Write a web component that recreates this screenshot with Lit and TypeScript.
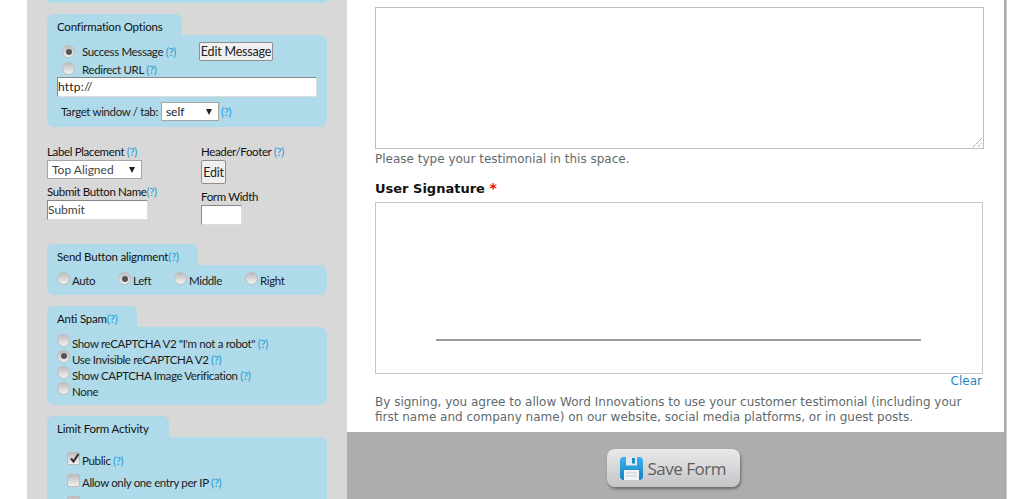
import { LitElement, html, css } from "lit";
import { customElement } from "lit/decorators.js";

const help = () => html`<span class="help">(?)</span>`;

@customElement("app-root")
export class AppRoot extends LitElement {
  static styles = css`
    :host {
      display: block;
      width: 1013px;
      height: 499px;
      overflow: hidden;
      background: #fff;
      font-family: "Lato", "Liberation Sans", sans-serif;
      font-size: 11.5px;
      letter-spacing: -0.36px;
      color: #1c1c1c;
    }
    .page { display: flex; height: 499px; padding-left: 27px; box-sizing: border-box; }
    .side { width: 320px; flex: none; background: #d8d8d8; padding: 0 20px; box-sizing: border-box; height: 499px; overflow: hidden; display: flex; flex-direction: column; }
    .main { width: 657px; flex: none; display: flex; flex-direction: column; height: 499px; border-right: 2px solid #a9a9a9; box-shadow: 1px 0 0 #cfcfcf; background: #fff; letter-spacing: 0; }
    .topcap { height: 3px; background: #afdae9; border-radius: 0 0 7px 7px; flex: none; }
    .tab { background: #afdae9; border-radius: 6px 6px 0 0; height: 21px; line-height: 25px; padding-left: 10px; box-sizing: border-box; align-self: flex-start; color: #111; letter-spacing: -0.2px; white-space: nowrap; }
    .group { display: flex; flex-direction: column; flex: none; }
    .panel { background: #afdae9; border-radius: 0 7px 7px 7px; }
    .help { color: #1d9ad6; }
    .radio, .check { margin: 0; flex: none; box-sizing: border-box; background: linear-gradient(#bdbdbd, #f2f2f2); border: 1px solid #bcbcbc; position: relative; display: block; }
    .radio { width: 13px; height: 13px; border-radius: 50%; }
    .radio.on::after { content: ""; position: absolute; left: 2.5px; top: 2.5px; width: 6px; height: 6px; border-radius: 50%; background: #555; }
    .check { width: 13px; height: 13px; border-radius: 2px; }
    .check svg { position: absolute; left: 0; top: -1px; }
    .row { display: flex; align-items: center; white-space: nowrap; }
    .conf { height: 92px; padding: 7px 10px 0 10px; box-sizing: border-box; }
    .conf .r1 { height: 19px; padding-left: 5px; }
    .conf .r1 .lab { margin-left: 7px; width: 117px; }
    .conf .r2 { height: 16px; padding-left: 5px; }
    .conf .r2 .lab { margin: 0 0 0 7px; }
    .conf .r2 .radio { margin-top: -2px; }
    .btn { font: inherit; font-size: 12.5px; letter-spacing: -0.2px; color: #222; background: #f0f0f0; border: 1px solid #8f8f8f; border-radius: 2px; padding: 0; box-sizing: border-box; text-align: center; display: block; }
    .urlbox { height: 20px; width: 260px; background: #fff; border: 1px solid #888; border-right-color: #ddd; border-bottom-color: #ddd; box-sizing: border-box; line-height: 17px; font-size: 12px; letter-spacing: 0.2px; }
    .target { height: 28px; padding-left: 4px; }
    .target .help { margin-left: 2px; }
    .sel { background: #fff; border: 1px solid #a5a5a5; box-sizing: border-box; display: flex; align-items: center; justify-content: space-between; font-size: 12px; letter-spacing: 0; }
    .sel.self { width: 58px; height: 19px; margin: 1px 0 0 3px; padding: 0 6px 0 4px; }
    .arrow { width: 0; height: 0; border-left: 3.5px solid transparent; border-right: 3.5px solid transparent; border-top: 6px solid #222; }
    .settings { display: flex; height: 117px; flex: none; padding-top: 18px; box-sizing: border-box; }
    .colL { width: 154px; flex: none; display: flex; flex-direction: column; }
    .colR { display: flex; flex-direction: column; }
    .lbl { color: #111; line-height: 14px; white-space: nowrap; }
    .sel.top { width: 95px; height: 19px; margin-top: 1px; padding: 0 6px 0 4px; color: #444; }
    .lbl.b { margin-top: 6px; }
    .inp { background: #fff; border: 1px solid #888; border-right-color: #ddd; border-bottom-color: #ddd; box-sizing: border-box; }
    .inp.sub { width: 101px; height: 20px; margin-top: 1px; line-height: 18px; color: #444; font-size: 12px; letter-spacing: 0; }
    .edit { width: 25px; height: 24px; margin-top: 1px; padding-top: 1px; }
    .lbl.c { margin-top: 6px; }
    .inp.wid { width: 41px; height: 20px; margin-top: 1px; }
    .align .tab { width: 151px; }
    .align .panel { height: 30px; display: flex; align-items: center; padding-left: 10px; box-sizing: border-box; }
    .opt { display: flex; align-items: center; height: 100%; }
    .opt .radio { margin: -3px 2px 0 0; }
    .spam { margin-top: 11px; }
    .spam .tab { width: 90px; }
    .spam .panel { height: 78px; padding: 8px 10px 0 10px; box-sizing: border-box; }
    .spam .row { height: 16px; }
    .spam .radio { margin: -6px 2px 0 0; }
    .limit { margin-top: 11px; }
    .limit .tab { width: 122px; }
    .limit .panel { height: 100px; padding-top: 12px; box-sizing: border-box; padding-left: 20px; }
    .limit .row { height: 22px; }
    .limit .check { margin: -4px 2px 0 0; }
    .content { flex: 1; padding: 0 20px 0 28px; min-height: 0; font-family: "DejaVu Sans", "Verdana", sans-serif; }
    .ta { width: 609px; height: 142px; margin-top: 7px; border: 1px solid #bdbdbd; box-sizing: border-box; position: relative; background: #fff; }
    .ta svg { position: absolute; right: 0; bottom: 0; }
    .note { color: #5f6a6e; font-size: 12px; }
    .hint { margin-top: 2px; height: 16px; line-height: 16px; white-space: nowrap; }
    .sigl { margin-top: 14px; height: 17px; line-height: 16px; font-weight: 700; font-size: 13px; color: #111; white-space: nowrap; }
    .req { color: #f00; font-size: 14px; line-height: 0; }
    .sig { width: 608px; height: 172px; margin-top: 4px; border: 1px solid #c8c8c8; box-sizing: border-box; position: relative; }
    .sig .line { position: absolute; left: 60px; top: 136px; width: 485px; height: 2px; background: #9a9a9a; }
    .clear { width: 607px; text-align: right; color: #1f88c6; font-size: 12px; line-height: 14px; }
    .terms { margin-top: 7px; width: 600px; line-height: 15px; }
    .foot { height: 67px; flex: none; background: #adadad; display: flex; justify-content: center; padding: 17px 5px 0 0; box-sizing: border-box; }
    .save { width: 133px; height: 38px; box-sizing: border-box; border-radius: 8px; background: linear-gradient(#e9e9e9, #c4c5c7); box-shadow: 1px 2px 3px rgba(0,0,0,.4); display: flex; align-items: center; padding-left: 13px; gap: 5px; color: #5e5e5e; font-size: 17px; font-family: "Open Sans", sans-serif; white-space: nowrap; letter-spacing: -0.5px; }
    .save svg { flex: none; }
  `;

  render() {
    return html`<div class="page">
      <div class="side">
        <div class="topcap"></div>
        <div class="group" style="margin-top:11px">
          <div class="tab" style="width:135px">Confirmation Options</div>
          <div class="panel conf">
            <div class="row r1"><span class="radio on"></span><span class="lab">Success Message ${help()}</span><button class="btn" style="width:74px;height:19px">Edit Message</button></div>
            <div class="row r2"><span class="radio"></span><span class="lab">Redirect URL ${help()}</span></div>
            <div class="urlbox">http://</div>
            <div class="row target">Target window / tab:<span class="sel self"><span>self</span><span class="arrow"></span></span>${help()}</div>
          </div>
        </div>
        <div class="settings">
          <div class="colL">
            <div class="lbl">Label Placement ${help()}</div>
            <div class="sel top"><span>Top Aligned</span><span class="arrow"></span></div>
            <div class="lbl b">Submit Button Name${help()}</div>
            <div class="inp sub">Submit</div>
          </div>
          <div class="colR">
            <div class="lbl">Header/Footer ${help()}</div>
            <button class="btn edit">Edit</button>
            <div class="lbl c">Form Width</div>
            <div class="inp wid"></div>
          </div>
        </div>
        <div class="group align">
          <div class="tab">Send Button alignment${help()}</div>
          <div class="panel">
            <label class="opt" style="width:61px"><span class="radio"></span><span>Auto</span></label>
            <label class="opt" style="width:56px"><span class="radio on"></span><span>Left</span></label>
            <label class="opt" style="width:71px"><span class="radio"></span><span>Middle</span></label>
            <label class="opt"><span class="radio"></span><span>Right</span></label>
          </div>
        </div>
        <div class="group spam">
          <div class="tab">Anti Spam${help()}</div>
          <div class="panel">
            <div class="row"><span class="radio"></span>Show reCAPTCHA V2 "I'm not a robot"&nbsp;${help()}</div>
            <div class="row"><span class="radio on"></span>Use Invisible reCAPTCHA V2&nbsp;${help()}</div>
            <div class="row"><span class="radio"></span>Show CAPTCHA Image Verification&nbsp;${help()}</div>
            <div class="row"><span class="radio"></span>None</div>
          </div>
        </div>
        <div class="group limit">
          <div class="tab">Limit Form Activity</div>
          <div class="panel">
            <div class="row"><span class="check"><svg width="13" height="13" viewBox="0 0 13 13"><path d="M3 6.5 5.5 9.5 10.5 2" fill="none" stroke="#333" stroke-width="2.2"/></svg></span>Public&nbsp;${help()}</div>
            <div class="row"><span class="check"></span>Allow only one entry per IP&nbsp;${help()}</div>
            <div class="row"><span class="check"></span></div>
          </div>
        </div>
      </div>
      <div class="main">
        <div class="content">
          <div class="ta"><svg width="12" height="12" viewBox="0 0 12 12"><path d="M2 11 11 2M7 11 11 7" stroke="#777" stroke-dasharray="1 1" fill="none"/></svg></div>
          <div class="note hint">Please type your testimonial in this space.</div>
          <div class="sigl">User Signature <span class="req">*</span></div>
          <div class="sig"><div class="line"></div></div>
          <div class="clear">Clear</div>
          <div class="note terms">By signing, you agree to allow Word Innovations to use your customer testimonial (including your first name and company name) on our website, social media platforms, or in guest posts.</div>
        </div>
        <div class="foot">
          <div class="save">
            <svg width="23" height="23" viewBox="0 0 23 23">
              <defs><linearGradient id="sv" x1="0" y1="0" x2="0" y2="1"><stop offset="0" stop-color="#39b4ea"/><stop offset="1" stop-color="#1580c2"/></linearGradient></defs>
              <rect width="23" height="23" rx="4" fill="url(#sv)"/>
              <rect x="6" y="0" width="11" height="8.5" fill="#e2e8ec"/>
              <rect x="12" y="1" width="3" height="5.5" fill="#1b8fd0"/>
              <rect x="4" y="13" width="15" height="10" fill="#f1f3f4"/>
              <path d="M6 16H17M6 19H17" stroke="#c4c9cc"/>
            </svg>
            <span>Save Form</span>
          </div>
        </div>
      </div>
    </div>`;
  }
}
